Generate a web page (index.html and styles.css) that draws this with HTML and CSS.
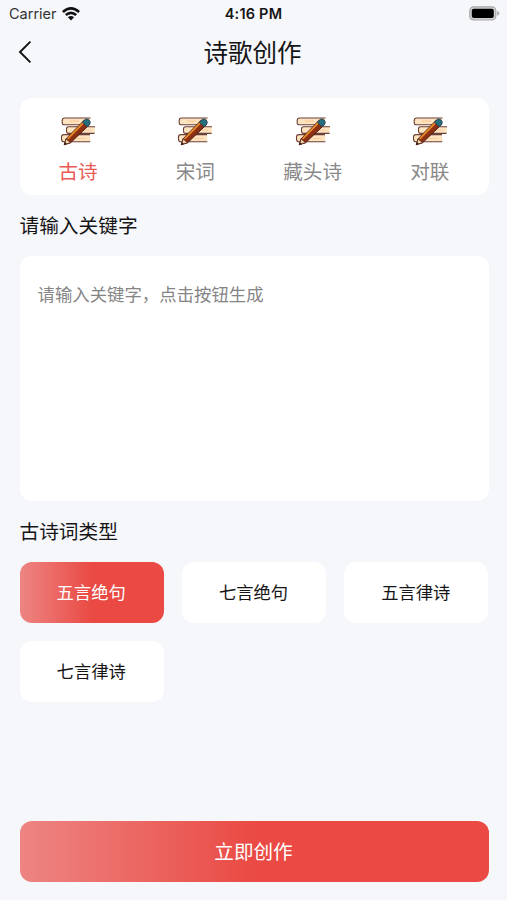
FILE: index.html
```
<!DOCTYPE html>
<html lang="zh-CN">
<head>
    <meta charset="UTF-8">
    <meta name="viewport" content="width=device-width, initial-scale=1.0">
    <title>诗歌创作</title>
    <link rel="stylesheet" href="styles.css">
</head>
<body>
    <!-- book icon shared by the four tabs -->
    <svg class="sprite" width="0" height="0">
        <symbol id="books" viewBox="0 0 36 30">
            <g fill="#fde3c0" stroke="#6b4038" stroke-width="1.1">
                <path d="M30.5 2H4.5Q2.2 2 2.2 4.6V6.4Q2.2 8.8 4.5 8.8H29"/>
                <path d="M35 10.7H8.5Q6.5 10.7 6.5 13V15Q6.5 17.4 8.5 17.4H34.6"/>
                <path d="M30 18.6H4Q1.5 18.6 1.5 21V23Q1.5 25.8 4 25.8H30.3"/>
            </g>
            <path d="M10 5.2h9M22 14h9M17 22.5h9" stroke="#fbcb98" stroke-width="1.2"/>
            <path d="M4.3 28.7L6.1 22.8L24.2 4.2L29.3 8.8L10.6 26.7Z" fill="#8c2f12" stroke="#4a1c12" stroke-width="1"/>
            <path d="M7.6 22.9L23.6 6.5" stroke="#e88b2c" stroke-width="1.8"/>
            <path d="M4.3 28.7L6.1 22.8L10.6 26.7Z" fill="#f5cfa5" stroke="#4a1c12" stroke-width=".8"/>
            <path d="M4 29L5 26.3L6.8 27.8Z" fill="#2c1712"/>
            <path d="M22.4 6.1L25.2 3.4Q27.2 2.2 29.2 4.1Q31 6 29.8 8.2L27 10.8Z" fill="#24707e" stroke="#263c48" stroke-width=".9"/>
        </symbol>
    </svg>

    <div class="status">
        <div class="carrier">
            <span>Carrier</span>
            <svg class="wifi" viewBox="0 0 18 14" width="18" height="14">
                <g fill="none" stroke="#111" stroke-width="2.6">
                    <path d="M.9 4.9Q9 -2.1 17.1 4.9"/>
                    <path d="M3.8 8.1Q9 3.7 14.2 8.1"/>
                </g>
                <path d="M5.9 10.2Q9 7.6 12.1 10.2L9 13.5Z" fill="#111"/>
            </svg>
        </div>
        <span class="time">4:16 PM</span>
        <svg class="battery" viewBox="0 0 31 15" width="31" height="15">
            <rect x=".8" y=".8" width="26" height="13.2" rx="3.8" fill="#d0d0d2" stroke="#aaa" stroke-width="1.2"/>
            <rect x="2.8" y="2.8" width="22" height="9.2" rx="2" fill="#000"/>
            <path d="M28.2 5Q30.4 6 30.4 7.4T28.2 9.8Z" fill="#aaa"/>
        </svg>
    </div>

    <div class="navbar">
        <svg class="back" viewBox="0 0 14 24" width="14" height="24">
            <path d="M12.4 1.6L2 12L12.4 22.4" fill="none" stroke="#111" stroke-width="1.9"/>
        </svg>
        <h1>诗歌创作</h1>
    </div>

    <div class="content">
        <div class="tabs">
            <div class="tab active"><svg class="icon"><use href="#books"/></svg><span>古诗</span></div>
            <div class="tab"><svg class="icon"><use href="#books"/></svg><span>宋词</span></div>
            <div class="tab"><svg class="icon"><use href="#books"/></svg><span>藏头诗</span></div>
            <div class="tab"><svg class="icon"><use href="#books"/></svg><span>对联</span></div>
        </div>

        <h2>请输入关键字</h2>
        <textarea class="keyword" placeholder="请输入关键字，点击按钮生成"></textarea>

        <h2>古诗词类型</h2>
        <div class="types">
            <button class="type selected">五言绝句</button>
            <button class="type">七言绝句</button>
            <button class="type">五言律诗</button>
            <button class="type">七言律诗</button>
        </div>

        <button class="submit">立即创作</button>
    </div>
</body>
</html>
```

FILE: styles.css
```
*{
    box-sizing: border-box;
}
body{
    margin: 0;
    height: 900px;
    display: flex;
    flex-direction: column;
    overflow: hidden;
    background-color: #f5f7fb;
    color: #151515;
    font-family: "Noto Sans CJK SC", sans-serif;
}
.sprite{
    display: none;
}
.status{
    height: 27px;
    padding: 0 7px 0 9px;
    display: grid;
    grid-template-columns: 1fr auto 1fr;
    align-items: center;
    font-family: Inter, sans-serif;
    font-size: 14.5px;
}
.carrier{
    display: flex;
    align-items: center;
    gap: 5px;
    color: #333;
}
.time{
    font-weight: 600;
    padding-right: 2px;
    letter-spacing: .2px;
}
.battery{
    justify-self: end;
}
.navbar{
    height: 50px;
    padding: 0 20px 0 18px;
    display: grid;
    grid-template-columns: 14px 1fr 14px;
    align-items: center;
}
h1{
    margin: 0;
    text-align: center;
    font-size: 24.5px;
    font-weight: 400;
    line-height: 36px;
}
.content{
    flex: 1;
    padding: 21px 18.5px 18.5px 19.5px;
    display: flex;
    flex-direction: column;
}
.tabs{
    height: 97px;
    display: grid;
    grid-template-columns: repeat(4, 1fr);
    background-color: #fff;
    border-radius: 12px;
}
.tab{
    padding-top: 18px;
    display: flex;
    flex-direction: column;
    align-items: center;
    gap: 10px;
    color: #888;
    font-size: 19.6px;
    line-height: 30px;
}
.tab.active{
    color: #ea5a54;
}
.icon{
    width: 36px;
    height: 30px;
}
h2{
    margin: 0;
    height: 61px;
    font-size: 19.7px;
    font-weight: 400;
    line-height: 60px;
}
.keyword{
    height: 245px;
    padding: 25px 18px;
    border: none;
    border-radius: 12px;
    resize: none;
    background-color: #fff;
    font-family: inherit;
    font-size: 17.4px;
    line-height: 26px;
}
.keyword::placeholder{
    color: #858585;
}
.types{
    display: grid;
    grid-template-columns: repeat(3, 1fr);
    gap: 18px;
}
button{
    height: 61px;
    padding: 0 1px 2px 0;
    border: none;
    border-radius: 12px;
    font-family: inherit;
}
.type{
    background-color: #fff;
    color: #151515;
    font-size: 17.3px;
}
.selected,
.submit{
    background: linear-gradient(90deg, #ed8583 0%, #ea4a43 50%);
    color: #fff;
}
.submit{
    margin-top: auto;
    font-size: 19.6px;
}
```
